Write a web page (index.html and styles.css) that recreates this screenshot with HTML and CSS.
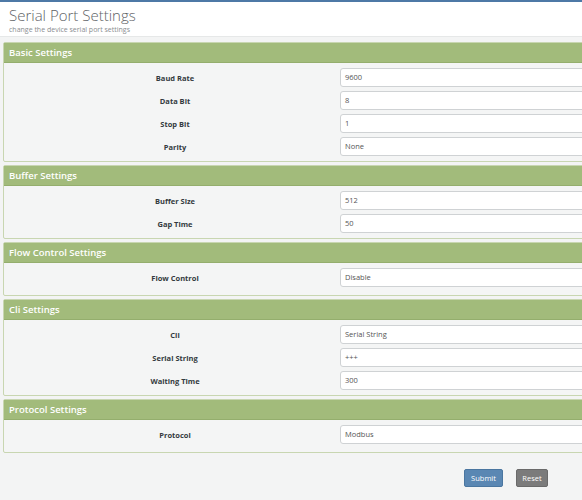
FILE: index.html
```html
<!DOCTYPE html>
<html>
<head>
<meta charset="utf-8">
<link rel="stylesheet" href="styles.css">
</head>
<body>
<div class="topbar"></div>
<header class="page-head">
  <h1 class="title">Serial Port Settings</h1>
  <p class="subtitle">change the device serial port settings</p>
</header>
<main class="content">
  <section class="panel">
    <div class="panel-head">Basic Settings</div>
    <div class="panel-body">
      <div class="row"><label class="lbl">Baud Rate</label><div class="field">9600</div></div>
      <div class="row"><label class="lbl">Data Bit</label><div class="field">8</div></div>
      <div class="row"><label class="lbl">Stop Bit</label><div class="field">1</div></div>
      <div class="row"><label class="lbl">Parity</label><div class="field">None</div></div>
    </div>
  </section>
  <section class="panel">
    <div class="panel-head">Buffer Settings</div>
    <div class="panel-body">
      <div class="row"><label class="lbl">Buffer Size</label><div class="field">512</div></div>
      <div class="row"><label class="lbl">Gap Time</label><div class="field">50</div></div>
    </div>
  </section>
  <section class="panel">
    <div class="panel-head">Flow Control Settings</div>
    <div class="panel-body">
      <div class="row"><label class="lbl">Flow Control</label><div class="field">Disable</div></div>
    </div>
  </section>
  <section class="panel">
    <div class="panel-head">Cli Settings</div>
    <div class="panel-body">
      <div class="row"><label class="lbl">Cli</label><div class="field">Serial String</div></div>
      <div class="row"><label class="lbl">Serial String</label><div class="field">+++</div></div>
      <div class="row"><label class="lbl">Waiting Time</label><div class="field">300</div></div>
    </div>
  </section>
  <section class="panel">
    <div class="panel-head">Protocol Settings</div>
    <div class="panel-body">
      <div class="row"><label class="lbl">Protocol</label><div class="field">Modbus</div></div>
    </div>
  </section>
  <div class="actions">
    <button class="btn btn-submit">Submit</button>
    <button class="btn btn-reset">Reset</button>
  </div>
</main>
</body>
</html>
```
FILE: styles.css
```css
html, body {
  margin: 0;
  padding: 0;
  overflow: hidden;
}
body {
  background: #f3f4f4;
  font-family: "Open Sans", "DejaVu Sans", sans-serif;
  width: 582px;
  height: 500px;
}
.topbar {
  height: 2px;
  background: #4d79a6;
}
.page-head {
  background: #ffffff;
  height: 35px;
  padding-left: 9px;
  box-sizing: border-box;
  border-bottom: 1px solid #e6e8e8;
}
.title {
  margin: 0;
  padding-top: 4px;
  font-size: 15px;
  font-weight: 300;
  color: #5e6266;
  line-height: 19px;
}
.subtitle {
  margin: 0;
  font-size: 7px;
  color: #8a8d90;
  line-height: 10px;
}
.content {
  padding: 5px 0 0 3px;
}
.panel {
  width: 620px;
  border: 1px solid #c8d6b1;
  border-radius: 2px;
  margin-bottom: 3px;
  background: #f4f5f5;
}
.panel-head {
  height: 20px;
  background: #a2bb7b;
  border-bottom: 1px solid #94ae6d;
  box-sizing: border-box;
  color: #ffffff;
  font-size: 9.5px;
  font-weight: 600;
  line-height: 20px;
  padding-left: 5px;
}
.panel-body {
  padding: 3px 0 3px 0;
  min-height: 32px;
  box-sizing: border-box;
}
.row {
  display: grid;
  grid-template-columns: 336px 1fr;
  height: 23px;
  align-items: center;
}
.lbl {
  padding-left: 6px;
  text-align: center;
  font-size: 7.5px;
  font-weight: 700;
  color: #333a40;
}
.field {
  height: 19px;
  width: 260px;
  box-sizing: border-box;
  background: #ffffff;
  border: 1px solid #cfd2d4;
  border-radius: 3px;
  padding-left: 4px;
  font-size: 7.5px;
  line-height: 17px;
  color: #555555;
}
.actions {
  display: flex;
  justify-content: flex-end;
  gap: 13px;
  padding: 13px 34px 0 0;
}
.btn {
  height: 18px;
  border-radius: 2px;
  color: #ffffff;
  font-family: "Open Sans", "DejaVu Sans", sans-serif;
  font-size: 7.5px;
  padding: 0;
  cursor: pointer;
}
.btn-submit {
  width: 39px;
  background: #5a87b3;
  border: 1px solid #4a76a0;
}
.btn-reset {
  width: 32px;
  background: #7b7b7b;
  border: 1px solid #6a6a6a;
}
```
